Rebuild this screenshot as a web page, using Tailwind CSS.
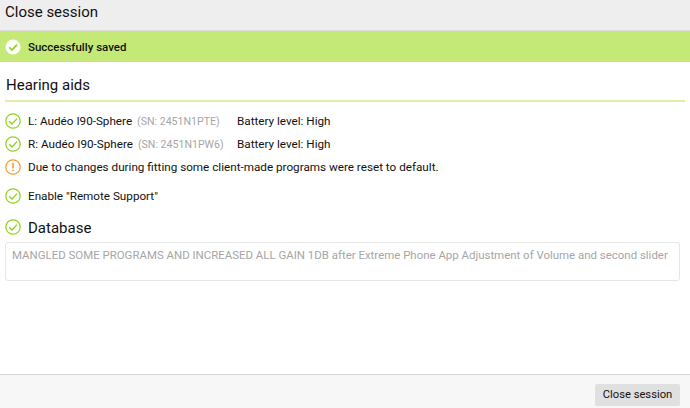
<!doctype html>
<html><head><script src="https://cdn.jsdelivr.net/npm/@tailwindcss/browser@4"></script></head>
<body class="m-0">
<div class="w-[690px] h-[408px] flex flex-col overflow-hidden bg-white text-[11.7px] text-[#111111] font-['Roboto',sans-serif] whitespace-nowrap">
  <div class="h-[31px] shrink-0 bg-[#eeeeee] border-b border-[#dcdcdc] flex items-center px-[5px] text-[15px] leading-none pb-[5px]">Close session</div>
  <div class="h-[31px] shrink-0 bg-[#c5e977] flex items-center gap-[7px] px-[5px] pt-[1px] font-medium text-[11.5px]">
    <svg class="w-[16px] h-[16px] shrink-0" viewBox="0 0 16 16"><circle cx="8" cy="8" r="7.5" fill="#fff"/><path d="M4.2 8.2 7 11l5-5.4" fill="none" stroke="#8fd119" stroke-width="1.6"/></svg>
    <span class="mt-[2px]">Successfully saved</span>
  </div>
  <div class="flex-1 flex flex-col px-[5px]">
    <div class="mt-[13px] h-[27px] border-b-2 border-[#d9f0a6] text-[15px] leading-[20px] px-[1px]">Hearing aids</div>
    <div class="mt-[8px] flex items-center gap-[7px] h-[23px]">
      <svg class="w-[16px] h-[16px] shrink-0 -mt-[2px]" viewBox="0 0 16 16"><circle cx="8" cy="8" r="7.2" fill="none" stroke="#8fd119" stroke-width="1.2"/><path d="M4.2 8.2 7 11l5-5.4" fill="none" stroke="#8fd119" stroke-width="1.3"/></svg>
      <span class="w-[202px]">L: Audéo I90-Sphere <span class="ml-[2px] text-[#a6a6a6] text-[10.6px]">(SN: 2451N1PTE)</span></span><span>Battery level: High</span>
    </div>
    <div class="flex items-center gap-[7px] h-[23px]">
      <svg class="w-[16px] h-[16px] shrink-0 -mt-[2px]" viewBox="0 0 16 16"><circle cx="8" cy="8" r="7.2" fill="none" stroke="#8fd119" stroke-width="1.2"/><path d="M4.2 8.2 7 11l5-5.4" fill="none" stroke="#8fd119" stroke-width="1.3"/></svg>
      <span class="w-[202px]">R: Audéo I90-Sphere <span class="ml-[2px] text-[#a6a6a6] text-[10.6px]">(SN: 2451N1PW6)</span></span><span>Battery level: High</span>
    </div>
    <div class="flex items-center gap-[7px] h-[23px]">
      <svg class="w-[16px] h-[16px] shrink-0 -mt-[2px]" viewBox="0 0 16 16"><circle cx="8" cy="8" r="7.2" fill="none" stroke="#f59a23" stroke-width="1.2"/><path d="M8 3.8v5.4M8 10.8v1.5" fill="none" stroke="#f59a23" stroke-width="1.6"/></svg>
      <span>Due to changes during fitting some client-made programs were reset to default.</span>
    </div>
    <div class="mt-[6px] flex items-center gap-[7px] h-[23px]">
      <svg class="w-[16px] h-[16px] shrink-0 -mt-[2px]" viewBox="0 0 16 16"><circle cx="8" cy="8" r="7.2" fill="none" stroke="#8fd119" stroke-width="1.2"/><path d="M4.2 8.2 7 11l5-5.4" fill="none" stroke="#8fd119" stroke-width="1.3"/></svg>
      <span>Enable "Remote Support"</span>
    </div>
    <div class="mt-[8px] flex items-center gap-[7px] h-[24px] text-[15px]">
      <svg class="w-[16px] h-[16px] shrink-0 -mt-[2px]" viewBox="0 0 16 16"><circle cx="8" cy="8" r="7.2" fill="none" stroke="#8fd119" stroke-width="1.2"/><path d="M4.2 8.2 7 11l5-5.4" fill="none" stroke="#8fd119" stroke-width="1.3"/></svg>
      <span>Database</span>
    </div>
    <div class="mt-[2px] h-[39px] w-[675px] border border-[#e6e6e6] rounded-[3px] px-[6px] py-[3px] text-[#a6a6a6] leading-[18px] text-[11.45px]">MANGLED SOME PROGRAMS AND INCREASED ALL GAIN 1DB after Extreme Phone App Adjustment of Volume and second slider</div>
  </div>
  <div class="h-[34px] shrink-0 bg-[#f7f7f7] border-t border-[#d4d4d4] flex items-center justify-end px-[10px]">
    <button class="h-[22px] w-[85px] mt-[7px] pt-[1px] bg-[#e0e0e0] rounded-[2px] text-[11.2px] text-[#111111]">Close session</button>
  </div>
</div>
</body></html>
